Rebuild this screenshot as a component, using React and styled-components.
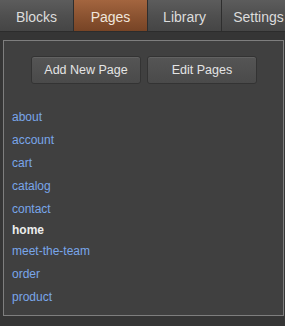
import React from 'react';
import styled, { createGlobalStyle } from 'styled-components';

const GlobalStyle = createGlobalStyle`
    html, body {
        margin: 0;
        padding: 0;
        background: #353535;
        font-family: "Liberation Sans", Arial, sans-serif;
        overflow: hidden;
    }
`;

const Wrapper = styled.div`
    width: 285px;
    height: 326px;
    background: #353535;
    overflow: hidden;
`;

const TabBar = styled.nav`
    display: flex;
    height: 32px;
    background: #3a3a3a;
    border-bottom: 1px solid #2c2c2c;
    box-sizing: border-box;
`;

const Tab = styled.div`
    flex: 0 0 74px;
    display: flex;
    align-items: center;
    justify-content: center;
    padding-top: 2px;
    box-sizing: border-box;
    font-size: 14px;
    color: ${(p) => (p.active ? '#f0e6dc' : '#dcdcdc')};
    border-right: 1px solid #2e2e2e;
    background: ${(p) =>
        p.active
            ? 'linear-gradient(to bottom, #a3653f 0%, #8a5230 55%, #774426 100%)'
            : 'linear-gradient(to bottom, #5c5c5c 0%, #4e4e4e 55%, #454545 100%)'};
    white-space: nowrap;
`;

const Panel = styled.section`
    margin: 8px 1px 0 3px;
    height: 276px;
    border: 1px solid #7e7e7e;
    background: #404040;
    box-sizing: border-box;
`;

const Actions = styled.div`
    display: flex;
    justify-content: center;
    gap: 6px;
    padding: 15px 0 0 1px;
`;

const Button = styled.button`
    width: 110px;
    height: 28px;
    border: 1px solid #333;
    border-radius: 3px;
    background: linear-gradient(to bottom, #555 0%, #4a4a4a 100%);
    color: #e4e4e4;
    font-family: "Liberation Sans", Arial, sans-serif;
    font-size: 12.5px;
    box-shadow: inset 0 1px 0 rgba(255, 255, 255, 0.08);
    padding: 0;
`;

const PageList = styled.ul`
    list-style: none;
    margin: 0;
    padding: 22px 0 0 8px;
`;

const PageItem = styled.li`
    height: ${(p) => (p.current ? '19px' : '23px')};
    line-height: ${(p) => (p.current ? '19px' : '23px')};
    font-size: 12px;
`;

const PageLink = styled.a`
    color: #79a6ea;
    text-decoration: none;
`;

const CurrentPage = styled.span`
    color: #ececec;
    font-weight: bold;
`;

const pages = ['about', 'account', 'cart', 'catalog', 'contact', 'home', 'meet-the-team', 'order', 'product'];

const App = () => (
    <Wrapper>
        <GlobalStyle />
        <TabBar>
            <Tab>Blocks</Tab>
            <Tab active>Pages</Tab>
            <Tab>Library</Tab>
            <Tab>Settings</Tab>
        </TabBar>
        <Panel>
            <Actions>
                <Button>Add New Page</Button>
                <Button>Edit Pages</Button>
            </Actions>
            <PageList>
                {pages.map((page) =>
                    page === 'home' ? (
                        <PageItem key={page} current>
                            <CurrentPage>{page}</CurrentPage>
                        </PageItem>
                    ) : (
                        <PageItem key={page}>
                            <PageLink href="#">{page}</PageLink>
                        </PageItem>
                    )
                )}
            </PageList>
        </Panel>
    </Wrapper>
);

export default App;
